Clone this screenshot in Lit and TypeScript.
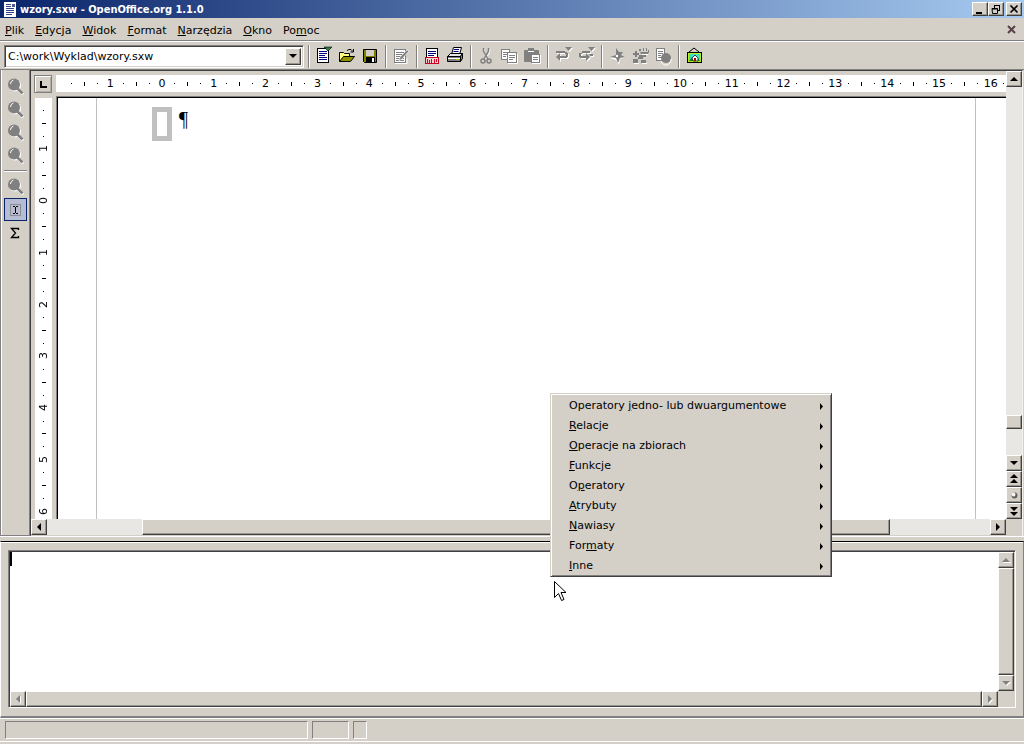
import { LitElement, html, svg, css, TemplateResult } from "lit";
import { customElement, property } from "lit/decorators.js";
import { classMap } from "lit/directives/class-map.js";

type Label = [string, string, string];

const label = ([a, key, b]: Label) => html`${a}<u>${key}</u>${b}`;

const G = "#808080";

const page = (x: number, y: number, w: number, h: number, ink: string, line: string) => svg`
  <rect x=${x + 0.5} y=${y + 0.5} width=${w - 1} height=${h - 1} fill="#fff" stroke=${ink} />
  ${Array.from({ length: Math.floor((h - 4) / 2) }, (_, i) => svg`
    <rect x=${x + 2} y=${y + 3 + i * 2} width=${i % 3 === 2 ? w - 6 : w - 4} height="1" fill=${line} />`)}`;

const undoShape = (color: string) => svg`
  <path d="M3 5h9v2H3zM12 6h2v1h1v4h-1v1H7v3l-4-4 4-4v3h6V8h-1z" fill=${color} /><path d="M12 1h7l-3.500 4z" fill=${color} />`;
const redoShape = (color: string) => svg`
  <path d="M6 5h8v2H6zM3 7h3v1H5v2h5V7l4 4-4 4v-3H4v-1H3z" fill=${color} /><path d="M12 1h7l-3.500 4z" fill=${color} /><path d="M13 8h4v2h-3z" fill=${color} />`;

const icons: Record<string, TemplateResult> = {
  new: svg`${page(3, 2, 12, 15, "#000", "#000080")}<path d="M10 1h8l-4 4z" fill="#2f7d46" stroke="#000" stroke-width=".6" />`,
  open: svg`<path d="M2.500 15.500v-9h4l1 1h5v3" fill="#ffff80" stroke="#000" />
    <path d="M2.500 15.500l4-5h11l-4 5z" fill="#909000" stroke="#000" />
    <path d="M10 4.500l2-1h2l2 2M16.500 3v3h-3" fill="none" stroke="#000" />`,
  save: svg`<path d="M3.500 3.500h13v13h-12l-1-1z" fill="#808000" stroke="#000" />
    <rect x="6" y="4" width="8" height="6" fill="#d4d0c8" /><rect x="6" y="11" width="9" height="6" fill="#000" />
    <rect x="12" y="12" width="2" height="4" fill="#fff" />`,
  edit: svg`<path d="M4 17.500h12v-5" fill="none" stroke="#fff" />${page(3, 3, 12, 14, G, G)}
    <path d="M18 5l-7 8-3 2 1-4 7-7z" fill=${G} stroke="#fff" stroke-width=".6" />`,
  pdf: svg`${page(4, 2, 12, 11, "#000", "#000080")}<rect x="3.500" y="11.500" width="13" height="6" fill="#f4d0d0" stroke="#c00020" />
    <path d="M5.500 13v5M7.500 14v3M9.500 13v4M12.500 13v5M14.500 13v3" stroke="#d00020" fill="none" />`,
  print: svg`<path d="M6.500 8.500l2-7h8l-2 7z" fill="#fff" stroke="#000" /><path d="M9 3.500h5M8.500 5.500h5" stroke="#000080" />
    <path d="M2.500 10.500l3-3h12l-2 3z" fill="#e8e8e8" stroke="#000" /><path d="M2.500 10.500h13v5h-13zM15.500 10.500l2-3v5l-2 3z" fill="#808080" stroke="#000" />
    <path d="M3 12.500h12" stroke="#fff" /><rect x="11" y="13" width="3" height="1" fill="#c0c000" />`,
  cut: svg`<g fill="none" stroke="#fff" transform="translate(1 1)"><path d="M7 2l1 5 4 5M13 2l-1 5-4 5" /></g>
    <g fill="none" stroke=${G} stroke-width="1.500"><path d="M7.500 2v3l4.500 8M12.500 2v3l-4.500 8" /><circle cx="7" cy="15" r="2" /><circle cx="13" cy="15" r="2" /></g>`,
  copy: svg`${page(2, 3, 9, 11, G, G)}${page(8, 6, 10, 11, G, G)}<path d="M9 17.500h9.500V8" fill="none" stroke="#fff" />`,
  paste: svg`<rect x="2" y="4" width="15" height="12" rx="1" fill=${G} /><rect x="6" y="2" width="6" height="4" fill=${G} />
    <rect x="6" y="5" width="6" height="1" fill="#fff" />${page(9, 8, 9, 9, G, G)}<path d="M10 17.500h8.500V9" fill="none" stroke="#fff" />`,
  undo: svg`<g transform="translate(1 1)">${undoShape("#fff")}</g>${undoShape(G)}`,
  redo: svg`<g transform="translate(1 1)">${redoShape("#fff")}</g>${redoShape(G)}`,
  navigator: svg`<path d="M10 3l2 5 6 3-5 2-1 6-3-5-6-2 6-2z" fill="#fff" />
    <path d="M9 2l3 4 4 0-2 3 4 2-5 1-2 5-2-5-6-1 6-2z" fill=${G} /><circle cx="10" cy="10" r="1.200" fill="#fff" />`,
  stylist: svg`<path d="M5 5h2v2h2v2H7v2H5V9H3V7h2zM9 3h2v2h-2zM13 2h1v3h-1zM16 2h1v3h-1zM18 4h1v3h-1zM10 6h8v2h-7zM9 9h7v2h-3v2H8v-2h1zM3 13h5v4H3zM11 14h5v3h-5z" fill=${G} />
    <path d="M4 17.500h5M12 17.500h5M12 8.500h6" stroke="#fff" />`,
  gallery: svg`${page(3, 2, 9, 13, G, G)}<circle cx="13" cy="12" r="5" fill=${G} /><path d="M8 15a5 5 0 0 0 10-2" fill="none" stroke="#fff" />`,
  picture: svg`<path d="M5 6l5-4 5 4" fill="none" stroke="#000" /><rect x="3.500" y="6.500" width="14" height="10" fill="#40e0c0" stroke="#000" />
    <rect x="4.500" y="7.500" width="12" height="8" fill="none" stroke="#b0f020" /><path d="M5 15l3-4 2 1 2-2 4 5z" fill="#108030" />
    <path d="M8 12l3-3 3 3v3H9z" fill="#fff" stroke="#000" stroke-width=".7" /><rect x="10" y="12" width="2" height="3" fill="#a00" />`,
  zoom: svg`<path d="M13 13.500l5 5" stroke="#fff" stroke-width="3" /><circle cx="10" cy="9.500" r="6" fill="#fff" />
    <circle cx="9" cy="8.500" r="6" fill=${G} /><path d="M12.500 12.500l5 5" stroke=${G} stroke-width="2.500" />
    <path d="M5.500 8q0-3 3-4" fill="none" stroke="#fff" />`,
  cursor: svg`<rect x="5.500" y="5.500" width="10" height="11" fill="none" stroke="#606060" stroke-dasharray="1 1" />
    <path d="M8 7.500h2M11 7.500h2M8 14.500h2M11 14.500h2M10.500 8v6" stroke="#000" fill="none" />`,
  sigma: svg`<path d="M13.500 8V6.500h-7l4 4.500-4 4.500h7V14" fill="none" stroke="#000" stroke-width="1.300" />`,
};

const glyphs: Record<string, TemplateResult> = {
  up: svg`<path d="M3 9h8L7 5z" />`,
  down: svg`<path d="M3 5h8L7 9z" />`,
  left: svg`<path d="M9 3v8L5 7z" />`,
  right: svg`<path d="M5 3v8l4-4z" />`,
  dblup: svg`<path d="M3 6h8L7 2zM3 11h8L7 7z" />`,
  dbldown: svg`<path d="M3 3h8L7 7zM3 8h8l-4 4z" />`,
  ball: svg`<circle cx="7.500" cy="7.500" r="3" fill="#606060" /><circle cx="6.500" cy="6.500" r="2" fill="#f4f4f0" />`,
};

const shared = css`
  * { box-sizing: border-box; }
  button {
    font: inherit; color: inherit; margin: 0; padding: 0; border: 0; background: none;
    display: flex; align-items: center; justify-content: center; flex: none;
  }
  svg { display: block; flex: none; }
  .raised {
    background: #d4d0c8; border: 1px solid; border-color: #fff #404040 #404040 #fff;
    box-shadow: inset -1px -1px #9a978f;
  }
`;

@customElement("office-scrollbar")
class OfficeScrollbar extends LitElement {
  @property({ type: Boolean }) vertical = false;
  @property({ type: Boolean }) disabled = false;
  @property({ type: Array }) parts: number[] = [0, 1, 0];
  @property({ type: Array }) extra: string[] = [];

  static styles = [shared, css`
    :host { display: flex; min-width: 0; min-height: 0; }
    .bar { display: flex; flex: 1; min-width: 0; min-height: 0; }
    .bar.vertical { flex-direction: column; }
    .step { width: 16px; height: 16px; }
    .step svg { fill: #000; }
    .disabled svg { fill: #808080; filter: drop-shadow(1px 1px #fff); }
    .track { display: flex; flex: 1; background: #e9e7e3; min-width: 0; min-height: 0; }
    .vertical .track { flex-direction: column; }
  `];

  step(name: string) {
    return html`<button class="step raised" aria-label=${name}>
      <svg width="14" height="14" viewBox="0 0 14 14">${glyphs[name]}</svg></button>`;
  }

  render() {
    const [a, b, c] = this.parts;
    return html`<div class=${classMap({ bar: true, vertical: this.vertical, disabled: this.disabled })}>
      ${this.step(this.vertical ? "up" : "left")}
      <div class="track">
        <div style="flex:${a}"></div><div class="raised" style="flex:${b}"></div><div style="flex:${c}"></div>
      </div>
      ${this.step(this.vertical ? "down" : "right")}
      ${this.extra.map((n) => this.step(n))}
    </div>`;
  }
}

@customElement("office-ruler")
class OfficeRuler extends LitElement {
  @property({ type: Boolean }) vertical = false;
  @property({ type: Number }) last = 16;

  static styles = [shared, css`
    :host { display: flex; background: #fff; overflow: hidden; min-width: 0; min-height: 0; }
    .scale { display: flex; flex: 1; margin: 0 -17px; color: #000; }
    .cell { flex: 1 1 0; min-width: 0; min-height: 0; display: grid; grid-template-columns: repeat(4, minmax(0, 1fr)); align-items: center; justify-items: center; }
    .num { display: flex; justify-content: center; width: 0; line-height: 16px; }
    .dot { width: 1px; height: 1px; background: #000; }
    .tick { width: 1px; height: 4px; background: #000; }
    .vertical { flex-direction: column; margin: -20px 0 -25px; }
    .vertical .cell { grid-template-columns: none; grid-template-rows: repeat(4, minmax(0, 1fr)); }
    .vertical .num { writing-mode: vertical-rl; transform: rotate(180deg); width: 16px; height: 0; }
    .vertical .tick { width: 4px; height: 1px; }
  `];

  render() {
    const marks = Array.from({ length: this.last + 3 }, (_, i) => i - 2);
    return html`<div class=${classMap({ scale: true, vertical: this.vertical })}>
      ${marks.map((n) => html`<div class="cell"><i class="dot"></i><span class="num">${n < -1 ? "" : Math.abs(n)}</span><i class="dot"></i><i class="tick"></i></div>`)}
    </div>`;
  }
}

@customElement("app-root")
class AppRoot extends LitElement {
  static styles = [shared, css`
    :host { display: block; }
    .app {
      position: relative; display: flex; flex-direction: column; height: 100vh; overflow: hidden;
      background: #d4d0c8; color: #000; font: 11px/16px "DejaVu Sans", sans-serif; cursor: default;
    }
    .title {
      display: flex; align-items: center; height: 18px; padding: 0 2px 0 4px; flex: none;
      background: linear-gradient(90deg, #0a246a, #a6caf0); color: #fff;
    }
    .title h1 { flex: 1; margin: 0 0 0 3px; padding-top: 2px; font: bold 11px/16px "DejaVu Sans Condensed", "DejaVu Sans", sans-serif; }
    .win { width: 16px; height: 14px; }
    .close { margin-left: 2px; }
    .menubar { display: flex; align-items: center; height: 23px; padding: 3px 8px 0 5px; border-bottom: 1px solid #808080; flex: none; }
    .menus { display: flex; gap: 11px; flex: 1; padding-top: 1px; }
    .toolbar {
      display: flex; align-items: center; height: 29px; padding: 1px 4px 0; border-top: 1px solid #fff;
      border-bottom: 1px solid #808080; flex: none;
    }
    .combo {
      display: flex; width: 300px; height: 23px; margin-right: 1px; border: 1px solid; border-color: #808080 #fff #fff #808080;
      box-shadow: inset 1px 1px #404040, inset -1px -1px #d4d0c8; background: #fff; padding: 2px;
    }
    .combo select { appearance: none; flex: 1; min-width: 0; border: 0; background: none; font: inherit; color: #000; padding: 1px 0 0 1px; outline: 0; }
    .drop { width: 16px; pointer-events: none; display: flex; align-items: center; justify-content: center; }
    .sep { width: 2px; height: 23px; margin: 0 3px; border-left: 1px solid #808080; border-right: 1px solid #fff; flex: none; }
    .tool { width: 23px; height: 23px; }
    .work { flex: 1; min-height: 0; display: grid; grid-template-columns: 31px minmax(0, 1fr); border-bottom: 1px solid #fff; }
    .side {
      display: flex; flex-direction: column; align-items: center; padding: 5px 0 0; border-left: 1px solid #808080;
      border-right: 1px solid #404040; border-bottom: 1px solid #808080; box-shadow: inset 1px 0 #fff, inset -1px 0 #808080;
    }
    .side .sep { width: 23px; height: 2px; margin: 3px 0; border: 0; border-top: 1px solid #808080; border-bottom: 1px solid #fff; }
    .active { border: 1px solid #0a246a; background: #b6bdd2; }
    .main {
      display: grid; min-height: 0; grid-template-columns: minmax(0, 1fr) 16px; grid-template-rows: minmax(0, 1fr) 16px;
      border-top: 1px solid #404040; margin-right: 1px; border-right: 1px solid #f4f2ee; padding-bottom: 1px;
    }
    .view { display: grid; min-height: 0; grid-template-columns: 25px minmax(0, 1fr); grid-template-rows: 25px minmax(0, 1fr); }
    .corner { width: 18px; height: 18px; margin: 4px 3px 3px; border: 1px solid #808080; box-shadow: inset 1px 1px #fff, inset -1px -1px #b0ada6; }
    .hruler { margin: 4px 0; }
    .vruler { margin: 2px 4px 0; }
    .canvas {
      background: #fff; border: solid #808080; border-width: 1px 0 0 1px; box-shadow: inset 1px 1px #000;
      display: flex; min-height: 0; padding: 1px 30px 0 39px;
    }
    .sheet { flex: 1; border: solid #c0c0c0; border-width: 0 1px; padding: 9px 0 0 55px; display: flex; align-items: flex-start; gap: 7px; }
    .formula { width: 20px; height: 34px; border: 5px solid #c0c0c0; }
    .pilcrow { font: 20px/24px "Liberation Serif", serif; }
    .panel {
      flex: none; height: 177px; margin-top: 4px; border-top: 1px solid #000; border-left: 1px solid #fff;
      border-right: 1px solid #808080; border-bottom: 2px solid #808080; padding: 8px 7px; display: flex;
      box-shadow: inset 0 1px #fff;
    }
    .editor {
      position: relative; flex: 1; display: grid; min-width: 0; grid-template-columns: minmax(0, 1fr) 16px;
      grid-template-rows: minmax(0, 1fr) 16px; border: 1px solid; border-color: #808080 #fff #fff #808080; padding: 1px 1px 0 1px;
      box-shadow: inset 1px 1px #404040;
    }
    textarea { border: 0; outline: 0; resize: none; overflow: hidden; background: #fff; padding: 1px; margin: 0; font: inherit; width: 100%; height: 100%; display: block; }
    .caret { position: absolute; left: 1px; top: 1px; width: 2px; height: 14px; background: #000; }
    .status { flex: none; height: 26px; border-top: 1px solid #fff; display: flex; gap: 4px; padding: 2px 5px 0; box-shadow: inset 0 -2px #d4d0c8, inset 0 -3px #fff; }
    .field { height: 18px; border: 1px solid; border-color: #808080 #fff #fff #808080; }
    .f1 { width: 303px; }
    .f2 { width: 37px; }
    .f3 { width: 14px; }
    .popup {
      position: absolute; left: 550px; top: 393px; width: 282px; padding: 1px 0 1px; border: 1px solid;
      border-color: #d4d0c8 #404040 #404040 #d4d0c8; background: #d4d0c8; box-shadow: inset 1px 1px #fff, inset -1px -1px #808080;
    }
    .popup button { width: 100%; height: 20px; padding: 2px 7px 0 18px; justify-content: space-between; }
    .pointer { position: absolute; left: 554px; top: 581px; pointer-events: none; }
  `];

  menus: Label[] = [["", "P", "lik"], ["", "E", "dycja"], ["", "W", "idok"], ["", "F", "ormat"], ["", "N", "arzędzia"], ["", "O", "kno"], ["Po", "m", "oc"]];

  categories: Label[] = [
    ["Operatory ", "j", "edno- lub dwuargumentowe"], ["", "R", "elacje"], ["", "O", "peracje na zbiorach"],
    ["", "F", "unkcje"], ["O", "p", "eratory"], ["", "A", "trybuty"], ["", "N", "awiasy"], ["For", "m", "aty"], ["", "I", "nne"],
  ];

  tools = ["|", "new", "open", "save", "|", "edit", "|", "pdf", "print", "|", "cut", "copy", "paste", "|", "undo", "redo", "|",
    "navigator", "stylist", "gallery", "|", "picture"];

  side = ["zoom", "zoom", "zoom", "zoom", "|", "zoom", "cursor", "sigma"];

  tool(name: string) {
    return name === "|"
      ? html`<div class="sep"></div>`
      : html`<button class=${classMap({ tool: true, active: name === "cursor" })} aria-label=${name}>
          <svg width="21" height="21" viewBox="0 0 21 21">${icons[name]}</svg></button>`;
  }

  render() {
    return html`<div class="app">
      <header class="title">
        <svg width="13" height="16" viewBox="0 0 13 16"><rect x="0" y="1" width="12" height="15" fill="#fff" />
          <path d="M2 3.500h5M2 5.500h5M2 7.500h8M2 9.500h8M2 11.500h8M2 13.500h6" stroke="#31408a" /><rect x="8" y="3" width="3" height="3" fill="#505a90" /></svg>
        <h1>wzory.sxw - OpenOffice.org 1.1.0</h1>
        <button class="win raised" aria-label="minimize"><svg width="12" height="11"><path d="M2 9h6" stroke="#000" stroke-width="2" /></svg></button>
        <button class="win raised" aria-label="restore"><svg width="12" height="11" fill="none" stroke="#000"><path d="M4 1.500h6M4.500 4V1M9.500 1v6M10 6.500H8M2 4.500h5.500v5H2.500zM2 5h6" /></svg></button>
        <button class="win raised close" aria-label="close"><svg width="12" height="11"><path d="M2.500 1.500l7 7M9.500 1.500l-7 7" stroke="#000" stroke-width="1.700" /></svg></button>
      </header>
      <nav class="menubar">
        <div class="menus">${this.menus.map((m) => html`<button>${label(m)}</button>`)}</div>
        <button aria-label="close document"><svg width="9" height="12"><path d="M1 1l7 7M8 1L1 8" stroke="#58404a" stroke-width="2" /></svg></button>
      </nav>
      <div class="toolbar">
        <div class="combo">
          <select aria-label="URL"><option>C:\\work\\Wyklad\\wzory.sxw</option></select>
          <span class="drop raised"><svg width="9" height="5"><path d="M0 0h8L4 4z" /></svg></span>
        </div>
        ${this.tools.map((t) => this.tool(t))}
      </div>
      <div class="work">
        <div class="side">${this.side.map((t) => this.tool(t))}</div>
        <div class="main">
          <div class="view">
            <button class="corner" aria-label="tab"><svg width="9" height="9"><path d="M2 1v6h6" fill="none" stroke="#000" stroke-width="2" /></svg></button>
            <office-ruler class="hruler"></office-ruler>
            <office-ruler class="vruler" vertical .last=${6}></office-ruler>
            <div class="canvas"><div class="sheet"><div class="formula"></div><span class="pilcrow">¶</span></div></div>
          </div>
          <office-scrollbar vertical .parts=${[330, 12, 26]} .extra=${["dblup", "ball", "dbldown"]}></office-scrollbar>
          <office-scrollbar .parts=${[95, 748, 100]}></office-scrollbar>
        </div>
      </div>
      <div class="panel">
        <div class="editor">
          <textarea aria-label="formula"></textarea>
          <office-scrollbar vertical disabled></office-scrollbar>
          <office-scrollbar disabled></office-scrollbar>
          <span class="caret"></span>
        </div>
      </div>
      <footer class="status"><div class="field f1"></div><div class="field f2"></div><div class="field f3"></div></footer>
      <div class="popup" role="menu">
        ${this.categories.map((c) => html`<button role="menuitem"><span>${label(c)}</span><svg width="4" height="7"><path d="M0 0v7l3-3.500z" /></svg></button>`)}
      </div>
      <svg class="pointer" width="13" height="21"><path d="M.5.5v16l4-4 3 7 2.500-1-3-7h5z" fill="#fff" stroke="#000" /></svg>
    </div>`;
  }
}
